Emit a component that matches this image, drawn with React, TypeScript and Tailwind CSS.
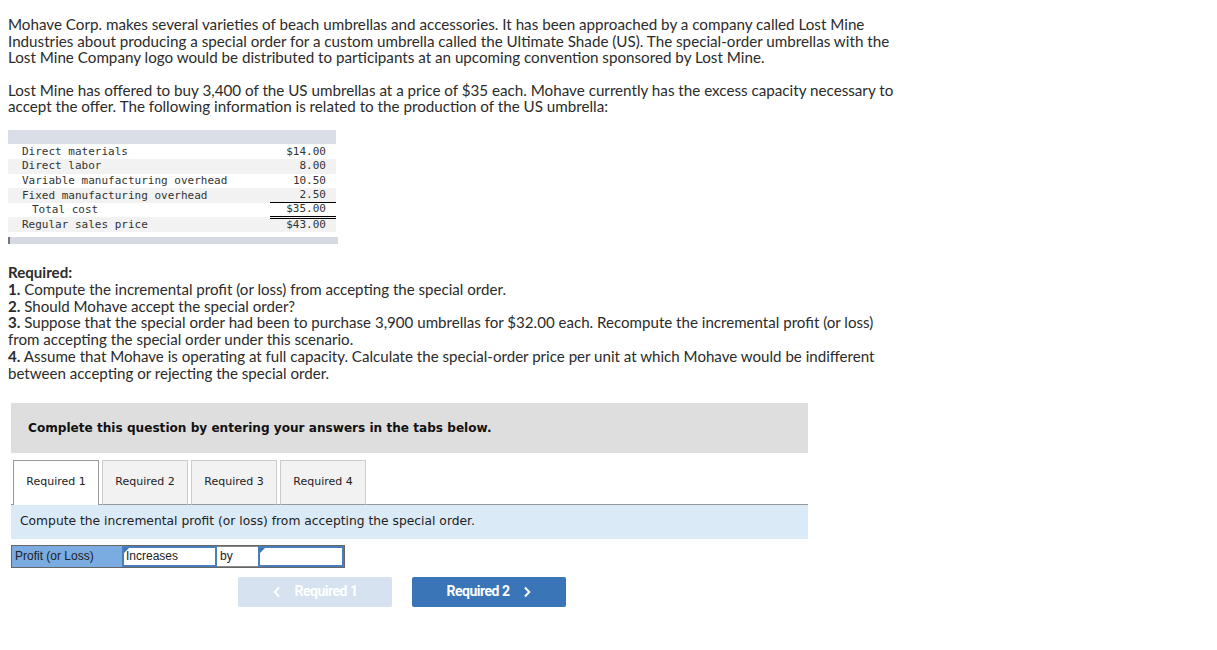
import React from 'react';

const costRows = [
  { label: 'Direct materials', value: '$14.00', shade: false },
  { label: 'Direct labor', value: '8.00', shade: true },
  { label: 'Variable manufacturing overhead', value: '10.50', shade: false },
  { label: 'Fixed manufacturing overhead', value: '2.50', shade: true, line: 'single' },
  { label: 'Total cost', value: '$35.00', shade: false, indent: true, line: 'double' },
  { label: 'Regular sales price', value: '$43.00', shade: true },
];

const tabs = ['Required 1', 'Required 2', 'Required 3', 'Required 4'];

const body = { fontFamily: 'Lato, "Open Sans", sans-serif' };
const verdana = { fontFamily: '"DejaVu Sans", Verdana, sans-serif' };
const mono = { fontFamily: '"DejaVu Sans Mono", "Liberation Mono", monospace' };
const arial = { fontFamily: '"Liberation Sans", Arial, sans-serif' };

const CostTable: React.FC = () => (
  <div className="mt-[15px] w-[330px]" style={mono}>
    <div className="h-[14px] w-[328px] bg-[#dadee6]" />
    <div className="w-[328px] pt-[1px]">
      {costRows.map((row) => (
        <div
          key={row.label}
          className={`flex h-[14.6px] items-center text-[11px] leading-[14px] text-[#333] ${row.shade ? 'bg-[#f2f2f2]' : 'bg-white'}`}
        >
          <div className={`flex-1 ${row.indent ? 'pl-[24px]' : 'pl-[14px]'}`}>{row.label}</div>
          <div
            className={`w-[66px] pr-[10px] text-right ${
              row.line === 'single'
                ? 'border-b border-black'
                : row.line === 'double'
                ? 'border-b-[3px] border-double border-black'
                : ''
            }`}
          >
            {row.value}
          </div>
        </div>
      ))}
    </div>
    <div className="mt-[5px] h-[7px] w-[330px] border-l-2 border-[#777] bg-[#d5d9e1]" />
  </div>
);

const App: React.FC = () => {
  return (
    <div className="min-h-[650px] bg-white pl-2 pt-[16px] text-[#2b2b2b]">
      <div className="w-[920px] text-[15.2px] leading-[16.5px]" style={body}>
        <p>
          Mohave Corp. makes several varieties of beach umbrellas and accessories. It has been approached by a company called Lost Mine
          <br />
          Industries about producing a special order for a custom umbrella called the Ultimate Shade (US). The special-order umbrellas with the
          <br />
          Lost Mine Company logo would be distributed to participants at an upcoming convention sponsored by Lost Mine.
        </p>
        <p className="mt-[16px]">
          Lost Mine has offered to buy 3,400 of the US umbrellas at a price of $35 each. Mohave currently has the excess capacity necessary to
          <br />
          accept the offer. The following information is related to the production of the US umbrella:
        </p>
      </div>

      <CostTable />

      <div className="mt-[20px] w-[920px] text-[15.1px] leading-[16.8px]" style={body}>
        <p className="font-bold">Required:</p>
        <p>
          <span className="font-bold">1.</span> Compute the incremental profit (or loss) from accepting the special order.
        </p>
        <p>
          <span className="font-bold">2.</span> Should Mohave accept the special order?
        </p>
        <p>
          <span className="font-bold">3.</span> Suppose that the special order had been to purchase 3,900 umbrellas for $32.00 each. Recompute the incremental profit (or loss)
          <br />
          from accepting the special order under this scenario.
        </p>
        <p>
          <span className="font-bold">4.</span> Assume that Mohave is operating at full capacity. Calculate the special-order price per unit at which Mohave would be indifferent
          <br />
          between accepting or rejecting the special order.
        </p>
      </div>

      <div className="ml-[3px] mt-[21px] w-[797px]">
        <div className="flex h-[50px] items-center bg-[#dedede] pl-[17px] text-[12.1px] font-bold text-[#111]" style={verdana}>
          Complete this question by entering your answers in the tabs below.
        </div>

        <div className="mt-[7px] flex gap-[3px] border-b border-[#999] pl-[2px]" style={verdana}>
          {tabs.map((tab, i) => (
            <div
              key={tab}
              className={`-mb-px flex h-[45px] w-[86px] items-center justify-center text-[11px] text-[#222] ${
                i === 0 ? 'border border-b-0 border-[#999] bg-white' : 'border border-[#ccc] border-b-[#999] bg-[#f2f2f2]'
              }`}
            >
              {tab}
            </div>
          ))}
        </div>

        <div className="flex h-[34px] items-center bg-[#dbeaf7] pl-[9px] text-[12.3px] text-[#222]" style={verdana}>
          Compute the incremental profit (or loss) from accepting the special order.
        </div>

        <div className="mt-[6px] flex h-[23px] w-[334px] border border-[#666] text-[12px]" style={arial}>
          <div className="flex w-[110px] items-center bg-[#7aabe1] pl-[3px] text-[#222]">Profit (or Loss)</div>
          <div className="relative flex w-[95px] items-center border-2 border-[#4a7ebb] bg-white pl-[2px] text-[#222]">
            <span className="absolute left-0 top-0 h-0 w-0 border-r-[5px] border-t-[5px] border-r-transparent border-t-[#3a75b8]" />
            Increases
          </div>
          <div className="flex w-[41px] items-center border-y border-[#888] bg-white pl-[3px] text-[#222]">by</div>
          <div className="relative flex-1 border-2 border-[#4a7ebb] bg-white">
            <span className="absolute left-0 top-0 h-0 w-0 border-r-[5px] border-t-[5px] border-r-transparent border-t-[#3a75b8]" />
          </div>
        </div>

        <div className="mt-[9px] flex gap-[20px] pl-[227px]" style={{ fontFamily: 'Roboto, sans-serif' }}>
          <button className="flex h-[30px] w-[154px] items-center justify-center gap-[14px] rounded-[2px] bg-[#d6e2f0] text-[14px] font-bold tracking-[-0.5px] text-white">
            <svg width="8" height="12" viewBox="0 0 8 12" fill="none" stroke="white" strokeWidth="2">
              <path d="M6 1.5 L1.8 6 L6 10.5" />
            </svg>
            Required 1
          </button>
          <button className="flex h-[30px] w-[154px] items-center justify-center gap-[14px] rounded-[2px] bg-[#3a75b8] text-[14px] font-bold tracking-[-0.5px] text-white">
            Required 2
            <svg width="8" height="12" viewBox="0 0 8 12" fill="none" stroke="white" strokeWidth="2">
              <path d="M2 1.5 L6.2 6 L2 10.5" />
            </svg>
          </button>
        </div>
      </div>
    </div>
  );
};

export default App;
